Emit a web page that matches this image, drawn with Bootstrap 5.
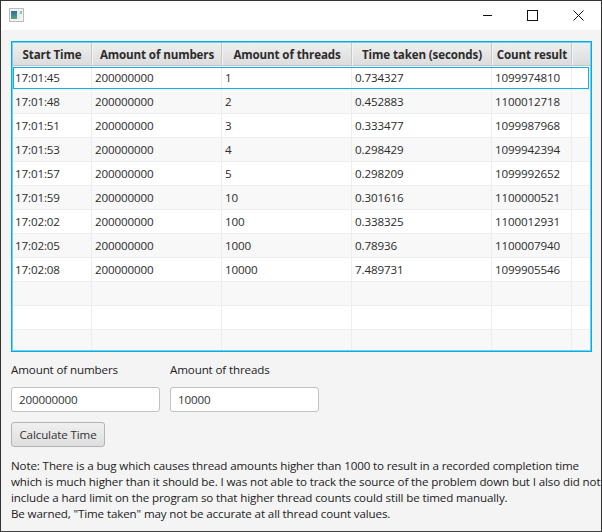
<!DOCTYPE html>
<html lang="en">
  <head>
    <meta charset="UTF-8" />
    <title>Thread timer</title>
    <link
      href="https://cdn.jsdelivr.net/npm/bootstrap@5.3.3/dist/css/bootstrap.min.css"
      rel="stylesheet"
    />
    <style>
      html,
      body {
        height: 100%;
        overflow: hidden;
        background: #f4f4f4;
      }

      .app-window {
        width: 602px;
        height: 532px;
        overflow: hidden;
        background: #f4f4f4;
        border: 1px solid #333;
        border-bottom-color: #444;
        font-family: "Open Sans", "Noto Sans", sans-serif;
        font-size: 11.6px;
        letter-spacing: -0.13px;
        color: #222;
      }

      .title-bar {
        height: 29px;
        flex: none;
        background: #fff;
        padding-left: 8px;
      }

      .win-btn {
        width: 46px;
        height: 29px;
      }

      .app-body {
        padding: 11px 10px 0;
      }

      .grid-box {
        width: 581px;
        height: 311px;
        border: 1px solid #00aee6;
        background: #fff;
        overflow: hidden;
      }

      .grid-box::after {
        content: "";
        position: absolute;
        inset: 0;
        box-shadow: inset 0 0 0 1px #6fd0f0;
        pointer-events: none;
      }

      .grid-table {
        table-layout: fixed;
        border-collapse: separate;
        border-spacing: 0;
        width: 579px;
        margin: 0;
        font-size: 11.6px;
        --bs-table-bg: transparent;
      }

      .grid-table th,
      .grid-table td {
        height: 24px;
        padding: 0 0 0 3px;
        line-height: 23px;
        border: 0;
        border-right: 1px solid #eee;
        border-bottom: 1px solid #eee;
        white-space: nowrap;
        color: #2c2c2c;
      }

      .grid-table th {
        padding: 2px 0 0;
        line-height: 21px;
        text-align: center;
        font-weight: 700;
        background: linear-gradient(#f0f0f0, #dcdcdc);
        border-right: 1px solid #c8c8c8;
        border-left: 1px solid #f4f4f4;
        border-bottom: 1px solid #c4c4c4;
      }

      .grid-table th:nth-child(1),
      .grid-table th:nth-child(5) {
        width: 80px;
      }

      .grid-table th:nth-child(2),
      .grid-table th:nth-child(3) {
        width: 130px;
      }

      .grid-table th:nth-child(4) {
        width: 140px;
      }

      .grid-table tbody tr:nth-child(odd) td {
        background: #fff;
      }

      .grid-table tbody tr:nth-child(even) td {
        background: #f8f8f8;
      }

      .pick-ring {
        position: absolute;
        top: 25px;
        left: 1px;
        width: 576px;
        height: 22px;
        border: 1px solid #12b0e4;
        pointer-events: none;
      }

      .field-row {
        margin-top: 10px;
        column-gap: 10px;
      }

      .field-col {
        width: 149px;
      }

      .field-label {
        line-height: 16px;
        margin-bottom: 9px;
        color: #222;
      }

      .field-input {
        height: 25px;
        padding: 0 7px;
        font-size: 11.6px;
        letter-spacing: -0.13px;
        color: #333;
        border: 1px solid #c2c2c2;
        border-radius: 3px;
        box-shadow: none;
      }

      .calc-btn {
        display: block;
        width: 94px;
        height: 25px;
        margin-top: 10px;
        padding: 0;
        font-size: 11.6px;
        letter-spacing: -0.13px;
        color: #333;
        border: 1px solid #b4b4b4;
        border-radius: 3px;
        background: linear-gradient(#f0f0f0, #dedede);
      }

      .note-text {
        width: 640px;
        line-height: 16px;
        margin-top: 11px;
        color: #222;
      }
    </style>
  </head>
  <body>
    <div class="app-window d-flex flex-column">
      <div class="title-bar d-flex align-items-center justify-content-between">
        <svg width="16" height="15" viewBox="0 0 16 15">
          <defs>
            <linearGradient id="iconPane" x1="0" y1="0" x2="0" y2="1">
              <stop offset="0" stop-color="#2f6f9f" />
              <stop offset="1" stop-color="#5f9f7f" />
            </linearGradient>
          </defs>
          <rect x="0.5" y="0.5" width="14" height="13" fill="#f2f2f2" stroke="#bdbdbd" />
          <rect x="2" y="3" width="6" height="8" fill="url(#iconPane)" />
          <rect x="8" y="3" width="3" height="8" fill="#e4ecec" />
          <rect x="11" y="3" width="2" height="3" fill="#9fc0a8" />
        </svg>
        <div class="d-flex">
          <div class="win-btn d-flex align-items-center justify-content-center">
            <svg width="11" height="11" viewBox="0 0 11 11"><path d="M2 5.5H11" stroke="#111" /></svg>
          </div>
          <div class="win-btn d-flex align-items-center justify-content-center">
            <svg width="11" height="11" viewBox="0 0 11 11"><rect x="0.5" y="0.5" width="10" height="10" fill="none" stroke="#111" /></svg>
          </div>
          <div class="win-btn d-flex align-items-center justify-content-center">
            <svg width="11" height="11" viewBox="0 0 11 11"><path d="M0.5 0.5L10.5 10.5M10.5 0.5L0.5 10.5" stroke="#111" /></svg>
          </div>
        </div>
      </div>

      <div class="app-body flex-grow-1">
        <div class="grid-box position-relative">
          <table class="table grid-table">
            <thead>
              <tr>
                <th>Start Time</th>
                <th>Amount of numbers</th>
                <th>Amount of threads</th>
                <th>Time taken (seconds)</th>
                <th>Count result</th>
                <th></th>
              </tr>
            </thead>
            <tbody id="gridRows"></tbody>
          </table>
          <div class="pick-ring"></div>
        </div>

        <div class="d-flex field-row">
          <div class="field-col">
            <div class="field-label">Amount of numbers</div>
            <input class="form-control field-input" type="text" value="200000000" />
          </div>
          <div class="field-col">
            <div class="field-label">Amount of threads</div>
            <input class="form-control field-input" type="text" value="10000" />
          </div>
        </div>

        <button class="btn calc-btn" type="button">Calculate Time</button>

        <div class="note-text">
          Note: There is a bug which causes thread amounts higher than 1000 to result in a recorded completion time<br />
          which is much higher than it should be. I was not able to track the source of the problem down but I also did not<br />
          include a hard limit on the program so that higher thread counts could still be timed manually.<br />
          Be warned, "Time taken" may not be accurate at all thread count values.
        </div>
      </div>
    </div>

    <script src="https://cdn.jsdelivr.net/npm/bootstrap@5.3.3/dist/js/bootstrap.bundle.min.js"></script>
    <script>
      const runs = [
        ["17:01:45", "200000000", "1", "0.734327", "1099974810"],
        ["17:01:48", "200000000", "2", "0.452883", "1100012718"],
        ["17:01:51", "200000000", "3", "0.333477", "1099987968"],
        ["17:01:53", "200000000", "4", "0.298429", "1099942394"],
        ["17:01:57", "200000000", "5", "0.298209", "1099992652"],
        ["17:01:59", "200000000", "10", "0.301616", "1100000521"],
        ["17:02:02", "200000000", "100", "0.338325", "1100012931"],
        ["17:02:05", "200000000", "1000", "0.78936", "1100007940"],
        ["17:02:08", "200000000", "10000", "7.489731", "1099905546"],
        ["", "", "", "", ""],
        ["", "", "", "", ""],
        ["", "", "", "", ""],
      ];

      document.getElementById("gridRows").innerHTML = runs
        .map(
          (r) =>
            "<tr>" + r.map((v) => "<td>" + v + "</td>").join("") + "<td></td></tr>"
        )
        .join("");
    </script>
  </body>
</html>
